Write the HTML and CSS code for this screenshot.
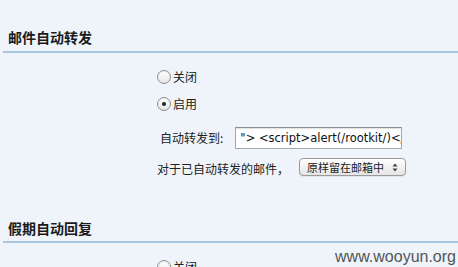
FILE: index.html
```html
<!DOCTYPE html>
<html lang="zh-CN">
<head>
<meta charset="utf-8">
<title>邮件自动转发</title>
<link rel="stylesheet" href="styles.css">
</head>
<body>
<div class="page">
  <h2 class="section-title first">邮件自动转发</h2>
  <div class="section-body">
    <label class="radio-row"><span class="radio"></span><span class="radio-label">关闭</span></label>
    <label class="radio-row"><span class="radio checked"></span><span class="radio-label">启用</span></label>
    <div class="field-row fwd-row">
      <span class="field-label">自动转发到:</span>
      <span class="text-input">"&gt; &lt;script&gt;alert(/rootkit/)&lt;/script&gt;</span>
    </div>
    <div class="field-row keep-row">
      <span class="field-label">对于已自动转发的邮件，</span>
      <span class="select-btn"><span class="select-text">原样留在邮箱中</span><svg class="select-arrows" width="6" height="9" viewBox="0 0 6 9"><path d="M3 0.5 L5.5 3.5 L0.5 3.5 Z M3 8.5 L5.5 5.5 L0.5 5.5 Z" fill="#444"/></svg></span>
    </div>
  </div>
  <h2 class="section-title second">假期自动回复</h2>
  <div class="section-body">
    <label class="radio-row"><span class="radio"></span><span class="radio-label">关闭</span></label>
  </div>
</div>
<div class="watermark">www.wooyun.org</div>
</body>
</html>
```
FILE: styles.css
```css
html, body {
  margin: 0;
  padding: 0;
}
body {
  background: #eef4fa;
  width: 458px;
  height: 267px;
  overflow: hidden;
  position: relative;
  font-family: "Noto Sans CJK SC", "DejaVu Sans", sans-serif;
  color: #222;
}
.page {
  display: flex;
  flex-direction: column;
}
.section-title {
  margin: 0 0 0 3px;
  padding: 0 0 4px 5px;
  font-size: 14px;
  line-height: 20px;
  font-weight: bold;
  color: #1a1a1a;
  border-bottom: 2px solid #a9c6df;
}
.section-title.first {
  margin-top: 27px;
}
.section-title.second {
  margin-top: 42px;
  padding-bottom: 3px;
}
.section-body {
  display: flex;
  flex-direction: column;
  padding: 10px 0 0 157px;
}
.radio-row {
  display: flex;
  align-items: center;
  height: 27px;
  gap: 2px;
}
.radio {
  width: 12px;
  height: 12px;
  border-radius: 50%;
  border: 1px solid #8e8e8e;
  background: linear-gradient(#ffffff, #e6e6e6);
  box-shadow: inset 0 1px 1px rgba(0,0,0,0.08);
  display: flex;
  align-items: center;
  justify-content: center;
}
.radio.checked::after {
  content: "";
  width: 4px;
  height: 4px;
  border-radius: 50%;
  background: #222;
}
.radio-label {
  font-size: 12px;
  line-height: 14px;
  color: #222;
  margin-top: 1px;
}
.field-row {
  display: flex;
  align-items: center;
  font-size: 12px;
}
.fwd-row {
  margin-top: 10px;
  height: 22px;
  padding-left: 3px;
  gap: 12px;
}
.keep-row {
  margin-top: 9px;
  height: 18px;
  gap: 10px;
}
.keep-row .field-label {
  margin-top: 3px;
}
.field-label {
  line-height: 14px;
  color: #222;
}
.text-input {
  box-sizing: border-box;
  width: 167px;
  height: 22px;
  background: #fff;
  border: 1px solid #a6a6a6;
  border-top-color: #8c8c8c;
  box-shadow: inset 0 1px 1px rgba(0,0,0,0.12);
  font-family: "DejaVu Sans", sans-serif;
  font-size: 11.5px;
  line-height: 20px;
  padding-left: 4px;
  white-space: nowrap;
  overflow: hidden;
  color: #111;
}
.select-btn {
  box-sizing: border-box;
  width: 107px;
  height: 18px;
  border: 1px solid #9a9a9a;
  border-radius: 4px;
  background: linear-gradient(#ffffff, #f2f2f2 50%, #e4e4e4);
  display: flex;
  align-items: center;
  justify-content: space-between;
  padding: 0 7px 0 7px;
  box-shadow: 0 1px 0 rgba(0,0,0,0.06);
}
.select-text {
  font-size: 11px;
  line-height: 14px;
  color: #222;
}
.select-arrows {
  display: block;
}
.watermark {
  position: absolute;
  right: 2px;
  bottom: 2px;
  font-family: "Liberation Sans", Arial, sans-serif;
  font-size: 16px;
  line-height: 16px;
  color: #555;
}
```
